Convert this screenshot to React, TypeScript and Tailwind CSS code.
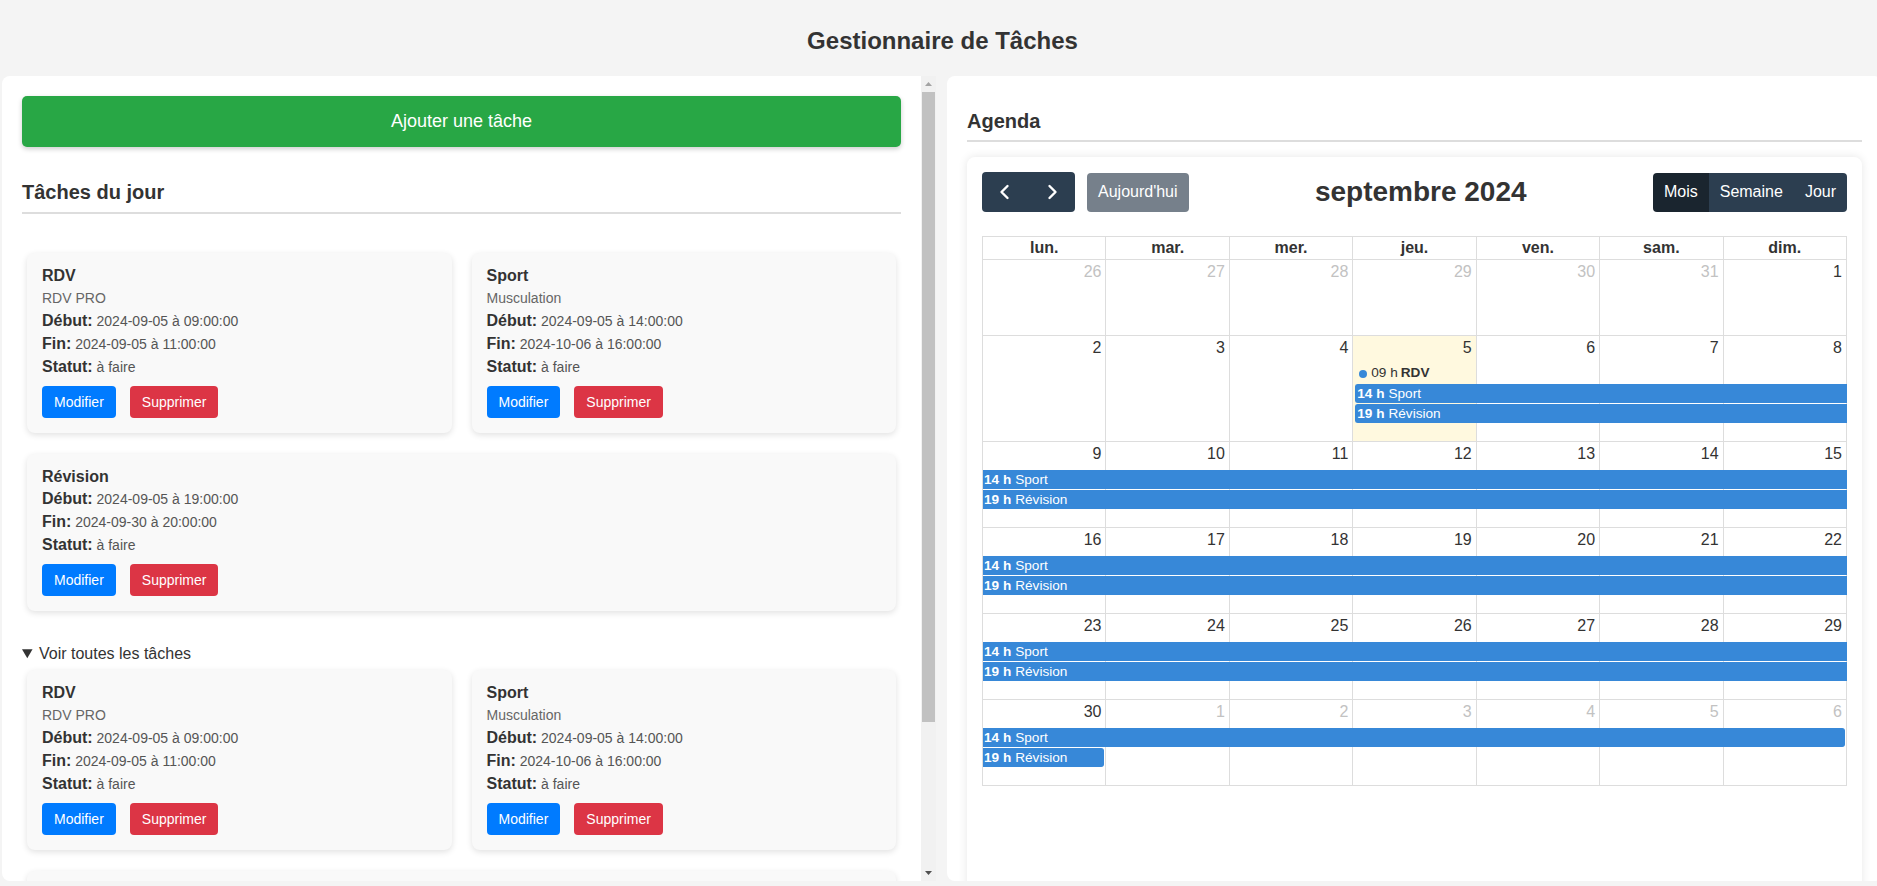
import React from 'react';

type Task = {
  id: number;
  title: string;
  description?: string;
  start: string;
  end: string;
  status: string;
};

const TASKS: Task[] = [
  { id: 1, title: 'RDV', description: 'RDV PRO', start: '2024-09-05 à 09:00:00', end: '2024-09-05 à 11:00:00', status: 'à faire' },
  { id: 2, title: 'Sport', description: 'Musculation', start: '2024-09-05 à 14:00:00', end: '2024-10-06 à 16:00:00', status: 'à faire' },
  { id: 3, title: 'Révision', start: '2024-09-05 à 19:00:00', end: '2024-09-30 à 20:00:00', status: 'à faire' },
];

const DAY_NAMES = ['lun.', 'mar.', 'mer.', 'jeu.', 'ven.', 'sam.', 'dim.'];
const CELL_COLS = ['col-start-1', 'col-start-2', 'col-start-3', 'col-start-4', 'col-start-5', 'col-start-6', 'col-start-7'];

type Day = { n: number; other?: boolean; today?: boolean };
type Bar = { time: string; label: string; pos: string; start?: boolean; end?: boolean };
type Week = { days: Day[]; rows: string; dot?: boolean; bars: Bar[] };

const days = (from: number, count: number, other = false): Day[] =>
  Array.from({ length: count }, (_, i) => ({ n: from + i, other }));

const fullWeek: Bar[] = [
  { time: '14 h', label: 'Sport', pos: 'col-start-1 col-end-8 row-start-2' },
  { time: '19 h', label: 'Révision', pos: 'col-start-1 col-end-8 row-start-3' },
];

const WEEKS: Week[] = [
  { days: [...days(26, 6, true), { n: 1 }], rows: 'grid-rows-[28px_48px]', bars: [] },
  {
    days: [{ n: 2 }, { n: 3 }, { n: 4 }, { n: 5, today: true }, { n: 6 }, { n: 7 }, { n: 8 }],
    rows: 'grid-rows-[28px_20px_20px_20px_18px]',
    dot: true,
    bars: [
      { time: '14 h', label: 'Sport', pos: 'col-start-4 col-end-8 row-start-3', start: true },
      { time: '19 h', label: 'Révision', pos: 'col-start-4 col-end-8 row-start-4', start: true },
    ],
  },
  { days: days(9, 7), rows: 'grid-rows-[28px_20px_20px_18px]', bars: fullWeek },
  { days: days(16, 7), rows: 'grid-rows-[28px_20px_20px_18px]', bars: fullWeek },
  { days: days(23, 7), rows: 'grid-rows-[28px_20px_20px_18px]', bars: fullWeek },
  {
    days: [{ n: 30 }, ...days(1, 6, true)],
    rows: 'grid-rows-[28px_20px_20px_18px]',
    bars: [
      { time: '14 h', label: 'Sport', pos: 'col-start-1 col-end-8 row-start-2', end: true },
      { time: '19 h', label: 'Révision', pos: 'col-start-1 col-end-2 row-start-3', end: true },
    ],
  },
];

const Line = ({ label, value }: { label: string; value: string }) => (
  <p className="text-[14px] leading-[23px] text-[#555]">
    <strong className="text-[16px] leading-4 text-[#333]">{label}</strong> {value}
  </p>
);

const TaskCard = ({ task }: { task: Task }) => (
  <div className="flex-[1_1_calc(50%-20px)] rounded-lg bg-[#f9f9f9] px-[15px] pb-[15px] pt-3 shadow-[0_2px_6px_rgba(0,0,0,0.12)]">
    <h3 className="text-[16px] font-bold leading-[22px] text-[#333]">{task.title}</h3>
    {task.description && <p className="text-[14px] leading-[23px] text-[#666]">{task.description}</p>}
    <Line label="Début:" value={task.start} />
    <Line label="Fin:" value={task.end} />
    <Line label="Statut:" value={task.status} />
    <div className="mt-[7px] flex gap-[14px]">
      <button type="button" className="h-8 rounded bg-[#007bff] px-3 text-[14px] text-white">
        Modifier
      </button>
      <button type="button" className="h-8 rounded bg-[#dc3545] px-3 text-[14px] text-white">
        Supprimer
      </button>
    </div>
  </div>
);

const TaskList = () => (
  <div className="flex flex-wrap gap-x-5 gap-y-[21px] px-[5px]">
    {TASKS.map((t) => (
      <TaskCard key={t.id} task={t} />
    ))}
  </div>
);

const Chevron = ({ dir }: { dir: 'left' | 'right' }) => (
  <svg className="h-4 w-4" viewBox="0 0 16 16" fill="none" stroke="currentColor" strokeWidth="2.4" strokeLinecap="round" strokeLinejoin="round">
    {dir === 'left' ? <path d="M10.5 2 4.5 8l6 6" /> : <path d="M5.5 2l6 6-6 6" />}
  </svg>
);

// classic scrollbar look, drawn beside the clipped task column
const ScrollTrack = () => (
  <div className="flex w-[15px] shrink-0 flex-col bg-[#f1f1f1]">
    <div className="flex h-4 items-center justify-center">
      <svg width="7" height="4" viewBox="0 0 7 4">
        <path d="M3.5 0 7 4H0z" fill="#a3a3a3" />
      </svg>
    </div>
    <div className="flex-1">
      <div className="mx-[1px] h-[630px] bg-[#c1c1c1]" />
    </div>
    <div className="flex h-4 items-center justify-center">
      <svg width="7" height="4" viewBox="0 0 7 4">
        <path d="M0 0h7L3.5 4z" fill="#505050" />
      </svg>
    </div>
  </div>
);

const Calendar = () => (
  <div className="min-h-[740px] rounded-lg bg-white px-[15px] pt-[15px] pb-6 shadow-[0_0_10px_rgba(0,0,0,0.1)]">
    <div className="flex items-center justify-between">
      <div className="flex items-center gap-3">
        <div className="flex">
          <button type="button" className="flex h-10 w-[46.5px] items-center justify-center rounded-l bg-[#2c3e50] text-white">
            <Chevron dir="left" />
          </button>
          <button type="button" className="flex h-10 w-[46.5px] items-center justify-center rounded-r bg-[#2c3e50] text-white">
            <Chevron dir="right" />
          </button>
        </div>
        <button type="button" className="h-[39px] rounded bg-[#76808b] px-[11px] text-[16px] text-white">
          Aujourd'hui
        </button>
      </div>
      <h2 className="text-[28px] font-bold leading-8 text-[#333]">septembre 2024</h2>
      <div className="flex h-[39px] overflow-hidden rounded text-[16px] text-white">
        <button type="button" className="bg-[#1a252f] px-[11px]">Mois</button>
        <button type="button" className="bg-[#2c3e50] px-[11px]">Semaine</button>
        <button type="button" className="bg-[#2c3e50] px-[11px]">Jour</button>
      </div>
    </div>

    <div className="mt-6 border-l border-t border-[#ddd]">
      <div className="grid grid-cols-7">
        {DAY_NAMES.map((d) => (
          <div key={d} className="border-b border-r border-[#ddd] py-[2px] text-center text-[16px] font-bold leading-[18px] text-[#333]">
            {d}
          </div>
        ))}
      </div>
      {WEEKS.map((w, wi) => (
        <div key={wi} className={`grid grid-cols-7 ${w.rows}`}>
          {w.days.map((d, di) => (
            <div
              key={di}
              className={`${CELL_COLS[di]} row-span-full border-b border-r border-[#ddd] ${d.today ? 'bg-[#fff9df]' : ''}`}
            >
              <div className={`pr-[4px] pt-[3px] text-right text-[16px] leading-[18px] ${d.other ? 'text-[#c2c2c2]' : 'text-[#333]'}`}>
                {d.n}
              </div>
            </div>
          ))}
          {w.dot && (
            <div className="col-start-4 col-end-5 row-start-2 ml-[2px] flex h-[19px] items-center whitespace-nowrap text-[13.6px] text-[#333]">
              <span className="mx-[4px] h-2 w-2 rounded-full bg-[#3788d8]" />
              <span className="mr-[3px]">09 h</span>
              <b>RDV</b>
            </div>
          )}
          {w.bars.map((b, bi) => (
            <div
              key={bi}
              className={`${b.pos} h-[19px] self-start overflow-hidden whitespace-nowrap border-y border-[#3788d8] bg-[#3788d8] pl-[1px] text-[13.6px] leading-[17px] text-white ${
                b.start ? 'ml-[2px] rounded-l-[3px] border-l' : ''
              } ${b.end ? 'mr-[2px] rounded-r-[3px] border-r' : ''}`}
            >
              <b className="mr-[4px]">{b.time}</b>
              {b.label}
            </div>
          ))}
        </div>
      ))}
    </div>
  </div>
);

export default function App() {
  return (
    <div className="h-screen overflow-hidden bg-[#f4f4f4] font-['Liberation_Sans',Arial,sans-serif] text-[#333]">
      <div className="w-[1885px]">
        <h1 className="pt-[27px] text-center text-[24px] font-bold leading-[28px] text-[#333]">Gestionnaire de Tâches</h1>
        <div className="mt-[21px] flex gap-[11px] pl-[2px]">
          <section className="flex h-[805px] w-[934px] shrink-0 overflow-hidden rounded-l-lg bg-white">
            <div className="min-w-0 flex-1 overflow-hidden p-5">
              <button
                type="button"
                className="h-[51px] w-full rounded-[5px] bg-[#28a745] text-[18px] text-white shadow-[0_2px_5px_rgba(0,0,0,0.2)]"
              >
                Ajouter une tâche
              </button>
              <h2 className="mt-[34px] border-b-2 border-[#ddd] pb-2 text-[20px] font-bold leading-[23px] text-[#333]">
                Tâches du jour
              </h2>
              <div className="mt-[39px]">
                <TaskList />
              </div>
              <details open className="mt-[34px]">
                <summary className="cursor-pointer text-[16px] leading-[18px] text-[#333]">Voir toutes les tâches</summary>
                <div className="mt-[7px]">
                  <TaskList />
                </div>
              </details>
            </div>
            <ScrollTrack />
          </section>

          <section className="h-[805px] w-[935px] shrink-0 overflow-hidden rounded-lg bg-white p-5">
            <h2 className="mt-[14px] border-b-2 border-[#ddd] pb-[7px] text-[20px] font-bold leading-[23px] text-[#333]">Agenda</h2>
            <div className="mt-[15px]">
              <Calendar />
            </div>
          </section>
        </div>
      </div>
    </div>
  );
}
